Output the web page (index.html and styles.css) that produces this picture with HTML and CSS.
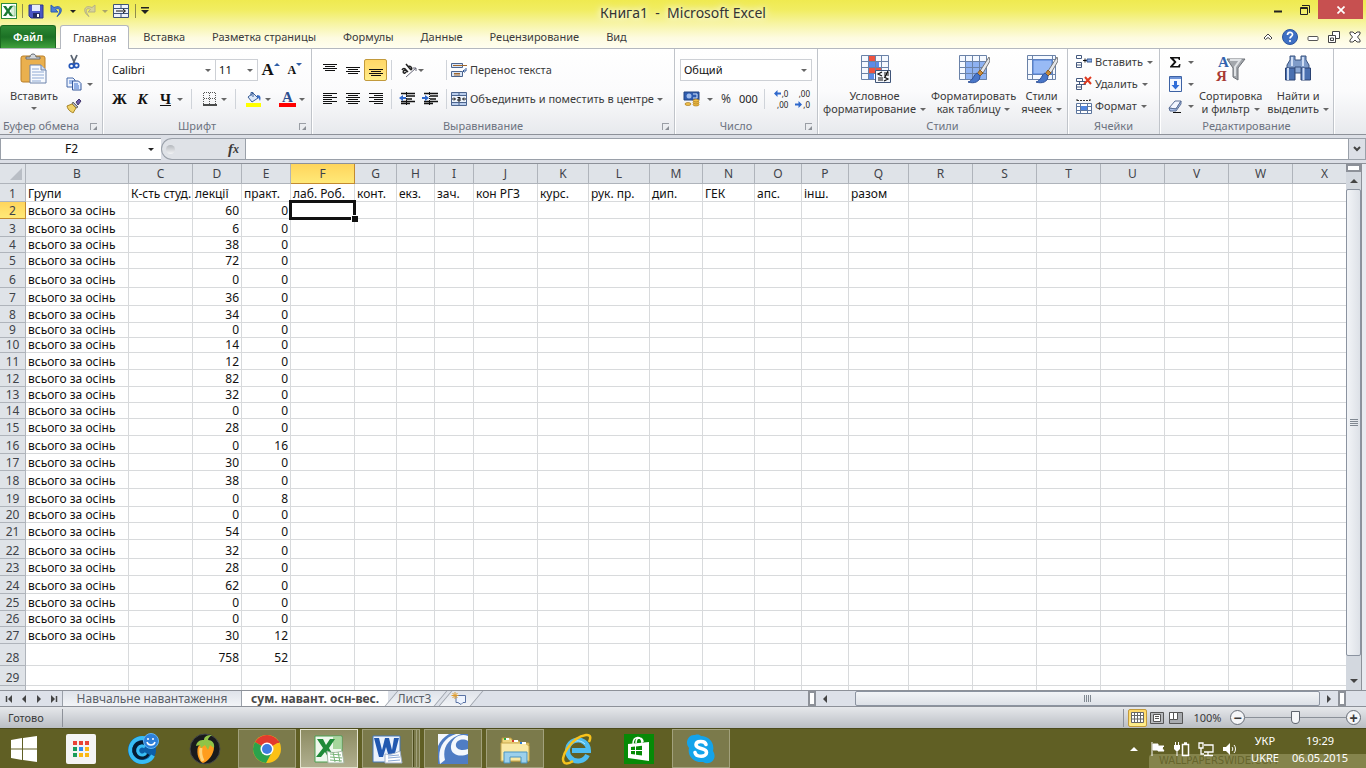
FILE: index.html
```
<!DOCTYPE html>
<html lang="ru">
<head>
    <meta charset="UTF-8">
    <title>Книга1 - Microsoft Excel</title>
    <link rel="stylesheet" href="styles.css">
</head>
<body>
<header class="top">
    <div class="titlebar">
        <div class="quick">
            <svg width="16" height="16" viewBox="0 0 16 16"><rect x=".5" y=".5" width="15" height="15" fill="#fff" stroke="#2f8a3c"/><path d="M10 3h4v10h-4" fill="#d9efd9" stroke="#8cc28c"/><path d="M2 3h3l2 3 2-3h3L8.500 8l3.500 5H9L7 10l-2 3H2l3.500-5z" fill="#1d7a34"/></svg>
            <span class="vsep"></span>
            <button title="Сохранить"><svg width="16" height="16" viewBox="0 0 16 16"><path d="M1 2h14v13H3l-2-2z" fill="#4a56c4" stroke="#2b3590"/><path d="M4 2h8v6H4z" fill="#e6ecfb"/><path d="M5 10h7v5H5z" fill="#222c66"/><path d="M9 11h2v3H9z" fill="#fff"/></svg></button>
            <button title="Отменить"><svg width="16" height="16" viewBox="0 0 16 16"><path d="M2 2v7h7L6.500 6.500C10 4 13 7 8 13.500 15 9 13 1 5 4.500z" fill="#4d7fd6" stroke="#2c5db4" stroke-width="1"/></svg></button>
            <i class="arr dark"></i>
            <button title="Вернуть"><svg width="16" height="16" viewBox="0 0 16 16"><path d="M14 2v7H7l2.500-2.500C6 4 3 7 8 13.500 1 9 3 1 11 4.500z" fill="#d6d29a" stroke="#b5b184" stroke-width="1"/></svg></button>
            <i class="arr pale"></i>
            <button title="Объединить"><svg width="17" height="16" viewBox="0 0 17 16"><path d="M.5 1.500h15v13H.5zM.5 5.500h15M.5 10.500h15M8 1.500v4M8 10.500v4" fill="#eef3fb" stroke="#3d5378"/><path d="M3 8h9M10 6l2.500 2L10 10" fill="none" stroke="#111"/></svg></button>
            <span class="vsep"></span>
            <button title="Настройка панели"><svg width="8" height="8" viewBox="0 0 8 8"><path d="M0 0h8v1.500H0zM0 3h8L4 7z" fill="#222"/></svg></button>
        </div>
        <h1>Книга1 &nbsp;- &nbsp;Microsoft Excel</h1>
        <div class="wincontrols">
            <button title="Свернуть"><svg width="10" height="10" viewBox="0 0 10 10"><path d="M1 6.500h8" stroke="#222" stroke-width="2"/></svg></button>
            <button title="Восстановить"><svg width="10" height="10" viewBox="0 0 10 10"><path d="M.5 2.500h7v7h-7zM2 .5h7.500V8M.5 3.500h7" fill="none" stroke="#222"/></svg></button>
            <button class="close" title="Закрыть"><svg width="8" height="8" viewBox="0 0 8 8"><path d="M.5.5l7 7M7.500.5l-7 7" stroke="#fff" stroke-width="1.700"/></svg></button>
        </div>
    </div>
    <nav class="tabs">
        <button class="file">Файл</button>
        <button class="tab current">Главная</button>
        <button class="tab">Вставка</button>
        <button class="tab">Разметка страницы</button>
        <button class="tab">Формулы</button>
        <button class="tab">Данные</button>
        <button class="tab">Рецензирование</button>
        <button class="tab">Вид</button>
        <div class="tabtools">
            <button title="Свернуть ленту"><svg width="10" height="8" viewBox="0 0 10 8"><path d="M1 5l4-4 4 4-1.500 1.500L5 4.500 2.500 6.500z" fill="#fff" stroke="#444"/></svg></button>
            <button title="Справка"><svg width="16" height="16" viewBox="0 0 16 16"><circle cx="8" cy="8" r="7.500" fill="#3e70c4" stroke="#2b559e"/><path d="M5.500 6c0-3.500 5-3.500 5-.5 0 2-2.500 2-2.500 4" fill="none" stroke="#fff" stroke-width="1.700"/><circle cx="8" cy="12" r="1.100" fill="#fff"/></svg></button>
            <button title="Свернуть окно"><svg width="12" height="12" viewBox="0 0 12 12"><rect x="1" y="5.500" width="10" height="4" rx="1" fill="#fff" stroke="#555"/></svg></button>
            <button title="Восстановить окно"><svg width="12" height="12" viewBox="0 0 12 12"><path d="M4.500.5h7v7h-7z" fill="#fff" stroke="#444"/><path d="M.5 4.500h7v7h-7zM2.500 7h3v2.500h-3z" fill="#fff" stroke="#444"/></svg></button>
            <button title="Закрыть окно"><svg width="12" height="12" viewBox="0 0 12 12"><path d="M1 1h3l2 2 2-2h3v2L8.500 6 11 9v2H8L6 9l-2 2H1V9l2.500-3L1 3z" fill="#fff" stroke="#444"/></svg></button>
        </div>
    </nav>
</header>

<section class="ribbon">
    <!-- Clipboard -->
    <div class="group g-clip">
        <div class="body cols">
            <button class="big">
                <svg width="30" height="32" viewBox="0 0 30 32"><rect x="2" y="3" width="24" height="26" rx="2" fill="#eab04e" stroke="#b97f28"/><path d="M7 6V4h4c0-4 6-4 6 0h4v2z" fill="#d5d9de" stroke="#666c74"/><path d="M11 12h11l5 5v13H11z" fill="#f7fafe" stroke="#6a82ab"/><path d="M22 12v5h5" fill="#cfdcf0" stroke="#6a82ab"/><path d="M13 16h7M13 19h12M13 22h12M13 25h12M13 28h9" stroke="#8ea9d4"/></svg>
                <span>Вставить</span>
                <i class="arr"></i>
            </button>
            <div class="stack">
                <button title="Вырезать"><svg width="16" height="16" viewBox="0 0 16 16"><path d="M5 1l4 9M11 1L7 10" stroke="#5a6472" stroke-width="1.800"/><circle cx="5.500" cy="12" r="2.200" fill="none" stroke="#2456b8" stroke-width="1.700"/><circle cx="10.500" cy="11.500" r="2.200" fill="none" stroke="#2456b8" stroke-width="1.700"/></svg></button>
                <button title="Копировать"><svg width="16" height="16" viewBox="0 0 16 16"><path d="M1 2h6l2 2v7H1z" fill="#eef4ff" stroke="#4468a8"/><path d="M3 5h4M3 7h4" stroke="#4a7dd0"/><path d="M6.500 5h6L15 7.500V14H6.500z" fill="#e4eeff" stroke="#34589c"/><path d="M8 8h4M8 10h5M8 12h5" stroke="#3a6ecb"/></svg><i class="arr"></i></button>
                <button title="Формат по образцу"><svg width="16" height="16" viewBox="0 0 16 16"><path d="M10 4l3-3 2 2-3 4z" fill="#6b5ca8" stroke="#44386f"/><path d="M7 4l5 5-2 1-4-4z" fill="#a9adb5" stroke="#666"/><path d="M1 8l5-2 4 4-3 5c-1-1-5-2-6-7z" fill="#f0d26a" stroke="#a88424"/></svg></button>
            </div>
        </div>
        <div class="label launchable">Буфер обмена<i class="launch"></i></div>
    </div>
    <!-- Font -->
    <div class="group g-font">
        <div class="body lines">
            <div class="line">
                <label class="combo font-name"><select aria-label="Шрифт"><option>Calibri</option></select></label>
                <label class="combo font-size"><select aria-label="Размер шрифта"><option>11</option></select></label>
                <button class="serif grow" title="Увеличить размер">A<sup class="up"></sup></button>
                <button class="serif shrink" title="Уменьшить размер">A<sup class="down"></sup></button>
            </div>
            <div class="line tools">
                <button class="serif"><b>Ж</b></button>
                <button class="serif"><b><em>К</em></b></button>
                <button class="serif"><b><u>Ч</u></b></button>
                <i class="arr"></i>
                <span class="sep"></span>
                <button title="Границы"><svg width="14" height="14" viewBox="0 0 14 14"><path d="M.5 1v12M6.500 1v12M12.500 1v12M1 .5h12M1 6.500h12" stroke="#555" stroke-dasharray="1 1"/><path d="M0 13h14" stroke="#111" stroke-width="1.500"/></svg></button>
                <i class="arr"></i>
                <span class="sep"></span>
                <button title="Цвет заливки"><svg width="17" height="16" viewBox="0 0 17 16"><path d="M3 6l5-4 5 5-6 4z" fill="#dce8f8" stroke="#3b5f98"/><path d="M6 5V1.500h2V6" fill="none" stroke="#3b5f98"/><path d="M12 4c4 0 4 3 3 6-1-2-1-3-3-4z" fill="#356ac4"/><path d="M1 12h15v4H1z" fill="#ffff00"/></svg></button>
                <i class="arr"></i>
                <button class="serif fontcolor" title="Цвет текста">A</button>
                <i class="arr"></i>
            </div>
        </div>
        <div class="label launchable">Шрифт<i class="launch"></i></div>
    </div>
    <!-- Alignment -->
    <div class="group g-align">
        <div class="body lines">
            <div class="line">
                <button title="По верхнему краю"><svg width="14" height="14" viewBox="0 0 14 14"><path d="M0 1.500h14M2 3.500h10M0 5.500h14M2 7.500h10" stroke="#111"/></svg></button>
                <button title="Выровнять по середине"><svg width="14" height="14" viewBox="0 0 14 14"><path d="M0 4.500h14M2 6.500h10M0 8.500h14M2 10.500h10" stroke="#111"/></svg></button>
                <button class="on" title="По нижнему краю"><svg width="14" height="14" viewBox="0 0 14 14"><path d="M0 6.500h14M2 8.500h10M0 10.500h14M2 12.500h10" stroke="#111"/></svg></button>
                <span class="sep"></span>
                <button class="wide" title="Ориентация"><svg width="16" height="16" viewBox="0 0 16 16"><path d="M1 8c1-2 3-2 4 0l2 2M5 8C1 8 2 12 4 11l2-2M5 2l5 6M7 5c2-2 5 1 3 3" fill="none" stroke="#222" stroke-width="1.500"/><path d="M5 15l10-9M15 9V6h-3" fill="none" stroke="#667"/></svg><i class="arr"></i></button>
                <span class="sep"></span>
                <button class="txt"><svg width="16" height="16" viewBox="0 0 16 16"><path d="M.5 1.500h11v4H.5zM.5 9.500h11v5H.5z" fill="#dbe6f6" stroke="#4b648e"/><path d="M2 3.500h14M3 11.500h6M3 13h6" stroke="#a0672c"/><path d="M15 6v3h-3M13.500 7.500L12 9l1.500 1.500" fill="none" stroke="#2d5596"/></svg>Перенос текста</button>
            </div>
            <div class="line">
                <button title="По левому краю"><svg width="14" height="14" viewBox="0 0 14 14"><path d="M0 1.500h14M0 3.500h9M0 5.500h14M0 7.500h9M0 9.500h14M0 11.500h9" stroke="#111"/></svg></button>
                <button title="По центру"><svg width="14" height="14" viewBox="0 0 14 14"><path d="M0 1.500h14M2 3.500h10M0 5.500h14M2 7.500h10M0 9.500h14M2 11.500h10" stroke="#111"/></svg></button>
                <button title="По правому краю"><svg width="14" height="14" viewBox="0 0 14 14"><path d="M0 1.500h14M5 3.500h9M0 5.500h14M5 7.500h9M0 9.500h14M5 11.500h9" stroke="#111"/></svg></button>
                <span class="sep"></span>
                <button title="Уменьшить отступ"><svg width="17" height="14" viewBox="0 0 17 14"><path d="M2 1.500h14M7 4h9M7 7h6M2 9.500h14M2 11.500h9" stroke="#111" stroke-width="1.500"/><path d="M7.500 0v14" stroke="#111" stroke-dasharray="1 1"/><path d="M0 6l4-3v2h3v2H4v2z" fill="#2f68cc"/></svg></button>
                <button title="Увеличить отступ"><svg width="17" height="14" viewBox="0 0 17 14"><path d="M2 1.500h14M8 4h8M8 7h6M2 9.500h14M2 11.500h9" stroke="#111" stroke-width="1.500"/><path d="M7.500 0v14" stroke="#111" stroke-dasharray="1 1"/><path d="M7 6L3 3v2H0v2h3v2z" fill="#2f68cc"/></svg></button>
                <span class="sep"></span>
                <button class="txt"><svg width="16" height="16" viewBox="0 0 16 16"><path d="M.5 1.500h15v13H.5z" fill="#b9cdec" stroke="#4b648e"/><path d="M.5 4.500h15M.5 11.500h15M8 1v3M8 12v3" stroke="#4b648e"/><path d="M1 5h14v6H1z" fill="#eef4fc"/><path d="M1 8h3M3 6.500L4.500 8 3 9.500M15 8h-3M13 6.500L11.500 8 13 9.500M6.500 6.500H9V10H7V8h2" fill="none" stroke="#111"/></svg>Объединить и поместить в центре<i class="arr"></i></button>
            </div>
        </div>
        <div class="label launchable">Выравнивание<i class="launch"></i></div>
    </div>
    <!-- Number -->
    <div class="group g-num">
        <div class="body lines">
            <div class="line">
                <label class="combo num-format"><select aria-label="Числовой формат"><option>Общий</option></select></label>
            </div>
            <div class="line">
                <button title="Денежный формат"><svg width="17" height="16" viewBox="0 0 17 16"><path d="M1 1h15v8H1z" fill="#2e5cb0" stroke="#224482"/><circle cx="6" cy="5" r="2.500" fill="#9fbcec"/><path d="M10 3h4v4h-4" fill="none" stroke="#cfe0fa"/><g fill="#f2c14a" stroke="#9a6a10" stroke-width=".6"><ellipse cx="13" cy="13.500" rx="3" ry="1.500"/><ellipse cx="13" cy="11.500" rx="3" ry="1.500"/><ellipse cx="13" cy="9.500" rx="3" ry="1.500"/><ellipse cx="5" cy="13" rx="3" ry="1.500"/></g></svg></button>
                <i class="arr"></i>
                <button class="pct">%</button>
                <button class="pct narrow">000</button>
                <span class="sep"></span>
                <button class="dec" title="Увеличить разрядность"><span><svg width="7" height="7" viewBox="0 0 7 7"><path d="M0 3.500L3.500 0v2.500H7v2H3.500V7z" fill="#2f68cc"/></svg>,0</span><span>,00</span></button>
                <button class="dec" title="Уменьшить разрядность"><span>,00</span><span><svg width="7" height="7" viewBox="0 0 7 7"><path d="M7 3.500L3.500 0v2.500H0v2h3.500V7z" fill="#2f68cc"/></svg>,0</span></button>
            </div>
        </div>
        <div class="label launchable">Число<i class="launch"></i></div>
    </div>
    <!-- Styles -->
    <div class="group g-styles">
        <div class="body cols">
            <button class="big">
                <svg width="32" height="32" viewBox="0 0 32 32"><path d="M2.500 2.500h27v24h-27z" fill="#f5f9ff"/><path d="M9 3h7v6H9zM9 15h13v6H9z" fill="#ee5340"/><path d="M9 9h11v6H9zM9 21h6v6H9z" fill="#5c8be8"/><path d="M2.500 2.500h27v24h-27zM9.500 2v25M16.500 2v25M22.500 2v25M2 8.500h28M2 14.500h28M2 20.500h28" fill="none" stroke="#6a82a8"/><path d="M16.500 17.500h15v12h-15z" fill="#f4f7fb" stroke="#3f5478"/><path d="M23 19l-4 2 4 2M19 25h5M19 27h5M25 20h5M25 22h5M29 18l-3 6M25 24l4 2-4 2" fill="none" stroke="#111" stroke-width="1.200"/></svg>
                <span>Условное</span><span>форматирование<i class="arr"></i></span>
            </button>
            <button class="big">
                <svg width="32" height="32" viewBox="0 0 32 32"><path d="M1.500 2.500h27v24h-27z" fill="#f5f9ff"/><path d="M8 9h21v18H8z" fill="#8eb2f2"/><path d="M1.500 2.500h27v24h-27zM7.500 2v25M14.500 2v25M21.500 2v25M1 8.500h28M1 14.500h28M1 20.500h28" fill="none" stroke="#6a82a8"/><path d="M31 4l-9 14 3 2 7-12z" fill="#e4e6ea" stroke="#777"/><path d="M22 17l-3 4 3 2 3-3z" fill="#c98b3a" stroke="#8a5a1c"/><path d="M19 20c-3 1-4 8-9 9 6 2 12 0 12-6z" fill="#4976c8" stroke="#2f529a"/></svg>
                <span>Форматировать</span><span>как таблицу<i class="arr"></i></span>
            </button>
            <button class="big">
                <svg width="32" height="32" viewBox="0 0 32 32"><path d="M1.500 2.500h28v24h-28z" fill="#f5f9ff" stroke="#6a82a8"/><path d="M6.500 2v25M26.500 2v25M1 6.500h28M1 21.500h28" stroke="#6a82a8"/><path d="M7 7h19v14H7z" fill="#98baf5" stroke="#4f7fd4"/><path d="M31 4l-9 14 3 2 7-12z" fill="#e4e6ea" stroke="#777"/><path d="M22 17l-3 4 3 2 3-3z" fill="#c98b3a" stroke="#8a5a1c"/><path d="M19 20c-3 1-4 8-9 9 6 2 12 0 12-6z" fill="#4976c8" stroke="#2f529a"/></svg>
                <span>Стили</span><span>ячеек<i class="arr"></i></span>
            </button>
        </div>
        <div class="label">Стили</div>
    </div>
    <!-- Cells -->
    <div class="group g-cells">
        <div class="body stack">
            <button class="txt"><svg width="16" height="16" viewBox="0 0 16 16"><path d="M.5 1.500h5v3h-5zM.5 8.500h5v5h-5zM.5 11h5" fill="#fff" stroke="#44597e"/><path d="M7 6.500h4M9 4.500v4" stroke="#111"/><path d="M11 5h5v3h-5z" fill="#8fb1ea" stroke="#34568e"/></svg>Вставить<i class="arr"></i></button>
            <button class="txt"><svg width="16" height="16" viewBox="0 0 16 16"><path d="M.5 2.500h6v3h-6zM3.500 5.500h6v3h-6zM.5 8.500h5v5h-5zM.5 11h5" fill="#fff" stroke="#44597e"/><path d="M9 1l6 7M15 1L8 8" stroke="#e03a20" stroke-width="2"/></svg>Удалить<i class="arr"></i></button>
            <button class="txt"><svg width="16" height="16" viewBox="0 0 16 16"><path d="M1 1v3M14 1v3M1 2.500h13" stroke="#333" stroke-dasharray="2 1"/><path d="M.5 5.500h15v10H.5zM4.500 5v10M11.500 5v10M0 8.500h16M0 12.500h16" fill="#fff" stroke="#5d769e"/><path d="M5 8h6v4H5z" fill="#4f86e2"/></svg>Формат<i class="arr"></i></button>
        </div>
        <div class="label">Ячейки</div>
    </div>
    <!-- Editing -->
    <div class="group g-edit">
        <div class="body cols">
            <div class="stack">
                <button title="Сумма"><svg width="16" height="16" viewBox="0 0 16 16"><path d="M3 3h10v3h-1l-1-1.500H6.500L9.500 8l-3.500 4h5l1.500-2h1l-.5 3.500H3v-1L7 8 3 4z" fill="#111"/></svg><i class="arr"></i></button>
                <button title="Заполнить"><svg width="16" height="16" viewBox="0 0 16 16"><path d="M2.500.5h12v15h-12z" fill="#f3f7ff" stroke="#3d62a4"/><path d="M3 1h11v2H3z" fill="#6d93d8"/><path d="M7 5h3v4h2.500l-4 4.500-4-4.500H7z" fill="#2f6cd8"/></svg><i class="arr"></i></button>
                <button title="Очистить"><svg width="16" height="16" viewBox="0 0 16 16"><path d="M2 10l6-7h6l-5 8z" fill="#f2f6ff" stroke="#5a6f96"/><path d="M2 10l7 1 5-8v3l-5 7H3z" fill="#a9c0ea" stroke="#5a6f96"/><path d="M6 14.500h8" stroke="#111"/></svg><i class="arr"></i></button>
            </div>
            <button class="big">
                <svg width="32" height="32" viewBox="0 0 32 32"><path d="M12 6h18l-7 9v12l-5-3v-9z" fill="#a3a7ac" stroke="#6c7076"/><path d="M15 7h10l-5 7v9" fill="none" stroke="#dfe2e5" stroke-width="2"/><text x="3" y="14" class="az az-a">A</text><text x="1" y="28" class="az az-z">Я</text></svg>
                <span>Сортировка</span><span>и фильтр<i class="arr"></i></span>
            </button>
            <button class="big">
                <svg width="32" height="32" viewBox="0 0 32 32"><path d="M8 3h5v4h6V3h5v4l3 5v6H5v-6l3-5z" fill="#7f9cc9" stroke="#38527f"/><path d="M3.500 15h9.500v12H3.500zM19 15h9.500v12H19z" fill="#4a70b0" stroke="#2a4272"/><path d="M6 15v12M21.500 15v12M10 4v9M21 4v9" stroke="#cfdef5" stroke-width="2"/><path d="M13 14h6v6h-6z" fill="#8da9d4" stroke="#38527f"/></svg>
                <span>Найти и</span><span>выделить<i class="arr"></i></span>
            </button>
        </div>
        <div class="label">Редактирование</div>
    </div>
</section>

<section class="formula">
    <div class="namebox"><input type="text" value="F2" aria-label="Имя"><i class="arr dark"></i></div>
    <div class="fx"><span class="knob"></span><button title="Вставить функцию"><i>f</i><sub>x</sub></button></div>
    <input class="fx-input" type="text" aria-label="Строка формул">
    <button class="expand" title="Развернуть"><svg width="8" height="6" viewBox="0 0 8 6"><path d="M1 1l3 3 3-3" fill="none" stroke="#444" stroke-width="2"/></svg></button>
</section>

<main class="sheet">
    <div class="grid"><table id="cells"></table></div>
    <div class="vscroll">
        <span class="split"></span>
        <button title="Вверх"><i class="tri up"></i></button>
        <div class="thumb"><span class="grip"></span></div>
        <button title="Вниз"><i class="tri down"></i></button>
    </div>
</main>

<div class="sheetbar">
    <div class="sheetnav">
        <button title="Первый"><svg width="8" height="8" viewBox="0 0 8 8"><path d="M1.500 1v6" stroke="#444" stroke-width="1.500"/><path d="M7 0v8L3 4z" fill="#444"/></svg></button>
        <button title="Назад"><svg width="8" height="8" viewBox="0 0 8 8"><path d="M6 0v8L2 4z" fill="#444"/></svg></button>
        <button title="Вперед"><svg width="8" height="8" viewBox="0 0 8 8"><path d="M2 0v8l4-4z" fill="#444"/></svg></button>
        <button title="Последний"><svg width="8" height="8" viewBox="0 0 8 8"><path d="M6.500 1v6" stroke="#444" stroke-width="1.500"/><path d="M1 0v8l4-4z" fill="#444"/></svg></button>
    </div>
    <button class="stab first">Навчальне навантаження</button>
    <button class="stab active">сум. навант. осн-вес.</button>
    <button class="stab slant">Лист3</button>
    <button class="stab slant add" title="Вставить лист"><svg width="16" height="14" viewBox="0 0 16 14"><path d="M5 3.500h9.500v7H12l-2 2-3-2H5z" fill="#eef4ff" stroke="#5a73a4"/><path d="M4 0v7M.5 3.500h7M1.500 1l5 5M6.500 1l-5 5" stroke="#e09c2a"/></svg></button>
    <div class="hscroll">
        <span class="split"></span>
        <button title="Влево"><i class="tri left"></i></button>
        <div class="track"><div class="thumb"><span class="grip"></span></div></div>
        <button title="Вправо"><i class="tri right"></i></button>
        <span class="split"></span>
    </div>
</div>

<div class="status">
    <span class="ready">Готово</span>
    <div class="views">
        <button class="on" title="Обычный"><svg width="13" height="11" viewBox="0 0 13 11"><path d="M.5.5h12v10H.5zM3.500 0v11M6.500 0v11M9.500 0v11M0 3.500h13M0 7h13" fill="#fff" stroke="#666"/></svg></button>
        <button title="Разметка страницы"><svg width="14" height="12" viewBox="0 0 14 12"><path d="M.5.5h13v11H.5z" fill="#b8babd" stroke="#555"/><path d="M3.500 2.500h7v7h-7zM5 4.500h4M5 6.500h4" fill="#fff" stroke="#555"/></svg></button>
        <button title="Страничный режим"><svg width="14" height="12" viewBox="0 0 14 12"><path d="M.5.5h13v11H.5z" fill="#a8abaf" stroke="#555"/><path d="M.5.5h4v7h-4zM4.500.5h4v7h-4z" fill="#fff" stroke="#555"/></svg></button>
    </div>
    <button class="percent">100%</button>
    <button class="round" title="Уменьшить">&minus;</button>
    <input class="zoom" type="range" min="0" max="100" value="50" aria-label="Масштаб">
    <button class="round" title="Увеличить">+</button>
</div>

<footer class="taskbar">
    <div class="apps">
        <button class="start" title="Пуск"><svg width="26" height="26" viewBox="0 0 26 26"><path d="M0 4l11-2v10.500H0zM12 2l14-2v12.500H12zM0 13.500h11V24L0 22zM12 13.500h14V26l-14-2z" fill="#fff"/></svg></button>
        <button class="app" title="Приложения"><svg width="30" height="30" viewBox="0 0 30 30"><rect width="30" height="30" rx="2" fill="#f4f4f4"/><path d="M7 7h4v4H7zM13 7h4v4h-4zM19 7h4v4h-4z" fill="#ea4335"/><path d="M7 13h4v4H7zM7 19h4v4H7z" fill="#1a9c5a"/><path d="M13 13h4v4h-4z" fill="#2f8cf0"/><path d="M19 13h4v4h-4zM13 19h4v4h-4zM19 19h4v4h-4z" fill="#fbb812"/></svg></button>
        <button class="app" title="CyberLink"><svg width="32" height="32" viewBox="0 0 32 32"><circle cx="15" cy="17" r="14" fill="#0b5ea8"/><path d="M26 22.500A12 12 0 1 1 20 6" fill="none" stroke="#38bdf5" stroke-width="4"/><path d="M21 21a7.500 7.500 0 1 1-2-10" fill="none" stroke="#061c33" stroke-width="4"/><path d="M19 20a4.500 4.500 0 1 1-1-6" fill="none" stroke="#38bdf5" stroke-width="3"/><circle cx="24" cy="8" r="7.500" fill="#2d7fd8" stroke="#5eb4f2"/><path d="M21 5v2M26 5v2M20 9c1 4 7 4 8 0" fill="none" stroke="#fff" stroke-width="1.500"/></svg></button>
        <button class="app" title="FL Studio"><svg width="32" height="32" viewBox="0 0 32 32"><circle cx="16" cy="16" r="15" fill="#191a1c" stroke="#45474a"/><path d="M9 14c-2 6 1 15 5 16 5-1 11-9 11-16-3-4-12-5-16 0z" fill="#ff9d1e"/><path d="M12 15c-1 5 0 9 2 13" fill="none" stroke="#ffd37a" stroke-width="3"/><path d="M7 13C8 8 11 7 15 7c0-4 4-5 8-5-2 1-4 3-4 5 4 0 7 3 6 8l-4-3-2 5-3-5-4 3-1-3z" fill="#8fc447"/></svg></button>
        <button class="app open" title="Google Chrome"><svg width="30" height="30" viewBox="0 0 30 30"><circle cx="15" cy="15" r="14" fill="#fbc116"/><path d="M15 15L2.900 8A14 14 0 0 1 27.100 8z" fill="#e23a2e"/><path d="M15 15L2.900 8A14 14 0 0 0 14 29l6-11z" fill="#2ba24c"/><path d="M15 8h12.100" stroke="#e23a2e" stroke-width="2"/><circle cx="15" cy="15" r="6.500" fill="#fff"/><circle cx="15" cy="15" r="5" fill="#3f7de0"/></svg></button>
        <button class="app open current" title="Microsoft Excel"><svg width="32" height="30" viewBox="0 0 32 30"><path d="M2 2h27v26H2z" fill="#eef7ec" stroke="#4aa050"/><path d="M20 3h8v12h-8z" fill="#a7d69c"/><path d="M4 5h6l3 6 4-6h5l-6 9 5 9h-6l-3-5-4 5H3l7-9z" fill="#1f8a38"/><path d="M14 17c4 2 9 2 15 0l2 12H15z" fill="#fff" stroke="#a6b8a4"/><path d="M17 20l11 1M17 23l12 1M17 26l12 1M20 18l2 10M25 18l2 10" stroke="#79b579"/></svg></button>
        <button class="app open group-app" title="Microsoft Word"><svg width="32" height="30" viewBox="0 0 32 30"><path d="M2 2h27v26H2z" fill="#eaf2fc" stroke="#4577b8"/><path d="M3 4h5l3 12 3-12h4l3 12 2-12h5l-5 19h-5l-3-10-3 10H8z" fill="#2158b0"/><path d="M14 20c4 1 9 0 15-3l2 12H14z" fill="#fff" stroke="#a3b3ca"/><path d="M17 22l11-1M17 24l12-1M17 27l12-1" stroke="#89a8d6"/></svg></button>
        <button class="app open" title="Коммандер"><svg width="30" height="30" viewBox="0 0 30 30"><path d="M0 0h30v30H0z" fill="#4f7dc4"/><path d="M0 12V0h11C6 3 2 7 0 12z" fill="#f4f8fd"/><path d="M2 30C-1 15 5 4 18 0h5C10 5 4 14 7 26z" fill="#f4f8fd"/><path d="M30 2v5c-5-3-11-1-12 3s4 8 12 5v5c-9 4-18 0-17-8C14 4 22-1 30 2z" fill="#f4f8fd"/></svg></button>
        <button class="app open" title="Проводник"><svg width="32" height="30" viewBox="0 0 32 30"><path d="M3 4h9l2 3h6l2 2h8v18H3z" fill="#f0d680" stroke="#b8973a"/><path d="M2 9h24l4 3v15H2z" fill="#fae9a6" stroke="#c8a84c"/><path d="M5 4h5v2H5zM13 6h6v2h-6zM21 8h6v2h-6z" fill="#fff"/><path d="M5 4h2v2H5z" fill="#2ca83a"/><path d="M13 6h2v2h-2z" fill="#d43d2a"/><path d="M21 8h2v2h-2z" fill="#2c7ed4"/><path d="M5 29V18h23v11h-6v-6H11v6z" fill="#9cd0ec" stroke="#4b94c0"/></svg></button>
        <button class="app" title="Internet Explorer"><svg width="32" height="32" viewBox="0 0 32 32"><path d="M26.500 22A10.500 10.500 0 1 1 27.500 17.500H11" fill="none" stroke="#4fbdf0" stroke-width="5"/><path d="M8 13C11 7 19 6 24 11" fill="none" stroke="#b5ecff"/><path d="M4 30C-3 27 10 4 25 2c5-.5 5 3 3 7M4 30c2 1 5 0 8-2" fill="none" stroke="#f7c21c" stroke-width="2.500"/></svg></button>
        <button class="app" title="Магазин"><svg width="30" height="30" viewBox="0 0 30 30"><path d="M0 0h30v30H0z" fill="#078a07"/><path d="M4 10l21-2v19L4 24z" fill="#fff"/><path d="M9 10c0-8 9-9 9-1M12 9c0-7 7-6 7-1" fill="none" stroke="#fff" stroke-width="1.500"/><path d="M7 13l4-.500v3.500H7zM12 12.400l6-.6v4.200h-6zM7 17h4v3.500L7 20zM12 17h6v4.500l-6-.8z" fill="#078a07"/></svg></button>
        <button class="app open" title="Skype"><svg width="30" height="30" viewBox="0 0 30 30"><path d="M9 1c3-1 5 0 6 1 8 0 14 7 12 15 5 8-3 15-10 11C8 29 1 22 3 14-2 8 3 0 9 1z" fill="#13a3ea"/><path d="M20 10.500c-1-4-10-4-10 .3 0 5 10.500 2.400 10.500 7.700 0 5-10.500 5-11.500 0" fill="none" stroke="#fff" stroke-width="3.600" stroke-linecap="round"/></svg></button>
    </div>
    <div class="tray">
        <button title="Скрытые значки"><i class="tri up light"></i></button>
        <button title="Центр поддержки"><svg width="16" height="16" viewBox="0 0 16 16"><path d="M2 1v14M3 3h5v2h6l-2 2 2 3H8V9H3z" fill="#fff" stroke="#fff"/></svg></button>
        <button title="Батарея"><svg width="16" height="16" viewBox="0 0 16 16"><path d="M8.500 3.500h6v11h-6zM10 2h3" fill="none" stroke="#fff" stroke-width="1.500"/><path d="M1.500 1v4M4.500 1v4M3 9v6" stroke="#fff"/><path d="M0 4h6v4L4 10H2L0 8z" fill="#fff"/></svg></button>
        <button title="Сеть"><svg width="16" height="16" viewBox="0 0 16 16"><path d="M6 4h9v7H6M10 11v3M6 14.500h9M1 2h4v5H1zM3 7v6h3" fill="none" stroke="#fff" stroke-width="1.300"/></svg></button>
        <button title="Громкость"><svg width="16" height="16" viewBox="0 0 16 16"><path d="M1 6h3l4-4v12l-4-4H1z" fill="#fff"/><path d="M10 6c1 1 1 3 0 4M12 4c2 2 2 6 0 8" fill="none" stroke="#fff"/></svg></button>
        <button class="lang"><span>УКР</span><span>UKRE</span></button>
        <button class="clock"><span>19:29</span><span>06.05.2015</span></button>
    </div>
    <div class="wall">WALLPAPERSWIDE.COM</div>
</footer>

<script src="script.js"></script>
</body>
</html>
```
FILE: styles.css
```
* {
    box-sizing: border-box;
    margin: 0;
    padding: 0;
}

html, body {
    height: 100%;
}

body {
    display: flex;
    flex-direction: column;
    overflow: hidden;
    font: 11px/14px "Noto Sans", "Open Sans", sans-serif;
    color: #3b3b3b;
    background: #dfe3e8;
}

button, input, select {
    font: inherit;
    color: inherit;
    background: none;
    border: 0;
    border-radius: 0;
    outline: 0;
}

button {
    display: inline-flex;
    align-items: center;
    justify-content: center;
    white-space: nowrap;
}

svg {
    display: block;
    flex: none;
}

/* small drop-down arrow */
.arr {
    display: inline-block;
    flex: none;
    border: 3px solid transparent;
    border-top-color: #666;
    border-bottom: 0;
}

.arr.dark {
    border-top-color: #222;
}

.arr.pale {
    border-top-color: #aaa66a;
}

/* Title and tabs */
.top {
    flex: none;
    background: linear-gradient(#efea50 0, #f1ed62 10px, #f7f4a4 24px, #fdfbe0 38px, #fffef0 48px);
}

.titlebar {
    display: grid;
    grid-template-columns: 1fr auto 1fr;
    height: 25px;
}

.quick {
    display: flex;
    align-items: center;
    gap: 5px;
    padding: 0 1px;
    height: 22px;
}

.vsep {
    width: 1px;
    height: 14px;
    background: #8f8c4c;
}

.titlebar h1 {
    font-size: 14px;
    font-weight: normal;
    line-height: 25px;
    color: #333;
    text-shadow: 0 0 6px #fff, 0 0 10px #fff;
}

.wincontrols {
    display: flex;
    justify-content: flex-end;
    padding-right: 3px;
    height: 19px;
}

.wincontrols button {
    width: 27px;
}

.wincontrols .close {
    width: 45px;
    background: #c75050;
}

.tabs {
    display: flex;
    height: 24px;
    border-bottom: 1px solid #b4b8bf;
}

.file {
    width: 56px;
    margin-right: 4px;
    color: #fff;
    font-weight: 600;
    background: linear-gradient(#2d8a35, #1c7125 50%, #3fa13c);
    border: 1px solid #1a6a20;
    border-bottom: 0;
    border-radius: 3px 3px 0 0;
}

.tab {
    padding: 0 14px 0 13px;
}

.tab.current {
    height: 24px;
    padding: 0 12px;
    margin-right: 1px;
    background: #fff;
    border: 1px solid #b4b8bf;
    border-bottom: 0;
    border-radius: 3px 3px 0 0;
}

.tabtools {
    display: flex;
    align-items: center;
    gap: 9px;
    margin-left: auto;
    padding-right: 5px;
}

/* Ribbon */
.ribbon {
    display: flex;
    flex: none;
    height: 86px;
    background: linear-gradient(#fff, #fbfbfc 50%, #e7e9ed);
    border-bottom: 1px solid #8d9199;
}

.group {
    display: flex;
    flex-direction: column;
    flex: none;
    border-right: 1px solid #c0c4ca;
    box-shadow: 1px 0 #fff;
}

.g-clip {
    width: 103px;
}

.g-font {
    width: 209px;
}

.g-align {
    width: 363px;
}

.g-num {
    width: 143px;
}

.g-styles {
    width: 250px;
}

.g-cells {
    width: 92px;
}

.g-edit {
    width: 174px;
}

.group .body {
    flex: 1;
}

.label {
    display: flex;
    align-items: center;
    justify-content: center;
    position: relative;
    height: 17px;
    color: #6c7280;
}

.launchable {
    padding-right: 20px;
}

.launch {
    position: absolute;
    right: 5px;
    top: 6px;
    width: 7px;
    height: 7px;
    border: 1px solid #9a9ea5;
    border-width: 1px 0 0 1px;
}

.launch::after {
    content: "";
    position: absolute;
    right: 0;
    bottom: 0;
    border: 2px solid #8b8f96;
    border-top-color: transparent;
    border-left-color: transparent;
}

.cols {
    display: flex;
}

.lines {
    padding: 10px 5px 0;
}

.line {
    display: flex;
    align-items: center;
    height: 22px;
    margin-bottom: 7px;
}

.line button {
    width: 23px;
    height: 22px;
}

.line .txt, .stack .txt {
    width: auto;
    gap: 3px;
}

.line .wide {
    width: 33px;
    margin: 0 8px 0 5px;
    justify-content: flex-start;
    gap: 1px;
}

.stack {
    padding-top: 2px;
}

.stack button {
    display: flex;
    height: 22px;
    gap: 4px;
}

.stack .arr {
    margin-left: 1px;
}

.big {
    flex-direction: column;
    justify-content: flex-start;
    padding-top: 4px;
    line-height: 13px;
}

.big svg {
    margin-bottom: 4px;
}

.big span .arr {
    margin: 0 0 2px 4px;
}

.big > .arr {
    margin-top: 5px;
}

.g-clip .big {
    width: 64px;
    margin-left: 2px;
}

.sep {
    width: 1px;
    height: 20px;
    margin: 0 4px;
    background: #cfd3d9;
}

.combo {
    position: relative;
    height: 22px;
    background: #fff;
    border: 1px solid #cdd0d5;
}

.combo select {
    display: block;
    width: 100%;
    height: 20px;
    padding: 0 3px;
    color: #111;
    appearance: none;
}

.combo::after {
    content: "";
    position: absolute;
    right: 4px;
    top: 9px;
    border: 3px solid transparent;
    border-top-color: #666;
    border-bottom: 0;
}

.font-name {
    width: 112px;
}

.font-size {
    width: 44px;
    margin-left: -1px;
}

.num-format {
    width: 134px;
}

.serif {
    font-family: "Liberation Serif", serif;
    font-size: 15px;
    color: #111;
}

.grow, .shrink {
    font-weight: bold;
    margin-left: 2px;
}

.shrink {
    font-size: 12px;
}

.grow {
    font-size: 17px;
}

.serif sup {
    align-self: flex-start;
    margin-top: 4px;
    border: 3px solid transparent;
}

.serif .up {
    border-bottom-color: #2f5ea8;
    border-top: 0;
}

.serif .down {
    border-top-color: #2f5ea8;
    border-bottom: 0;
}

.tools .sep {
    margin: 0 6px 0 7px;
}

.tools .arr {
    margin-right: 1px;
}

.line .fontcolor {
    width: 17px;
    height: 16px;
    margin: 0 3px 0 7px;
    font-weight: bold;
    color: #2c4f8f;
    line-height: 12px;
    border-bottom: 4px solid #f00;
}

.on {
    background: linear-gradient(#ffd868, #ffe27a 60%, #fff08c);
    border: 1px solid #c29a3c;
    border-radius: 2px;
}

.g-align .lines {
    padding-left: 6px;
}

.g-num .arr {
    margin: 0 2px 0 4px;
}

.pct {
    font-size: 12px;
}

.g-num .narrow {
    font-size: 11px;
    color: #222;
}

.line .dec {
    flex-direction: column;
    align-items: flex-end;
    width: 22px;
    padding-right: 2px;
    font-size: 8px;
    line-height: 11px;
    color: #222;
}

.dec span {
    display: flex;
    align-items: center;
    gap: 1px;
}

.g-styles .cols {
    justify-content: center;
    gap: 5px;
}

.g-cells .stack {
    padding-left: 8px;
}

.g-edit .cols {
    gap: 5px;
    padding-left: 7px;
}

.az {
    font: bold 15px "Liberation Serif", serif;
}

.az-a {
    fill: #3263ad;
}

.az-z {
    fill: #a83a34;
}

/* Formula bar */
.formula {
    display: flex;
    flex: none;
    height: 29px;
    padding: 3px 0;
    background: #dcdfe6;
    border-bottom: 1px solid #8d9199;
}

.namebox, .fx-input, .expand, .fx {
    border: 1px solid #9aa0a9;
}

.namebox {
    display: flex;
    align-items: center;
    width: 161px;
    padding-right: 7px;
    background: #fff;
    border-right: 0;
}

.namebox input {
    flex: 1;
    width: 60px;
    padding-right: 6px;
    text-align: center;
    font-size: 12px;
    color: #111;
}

.fx {
    display: flex;
    align-items: center;
    justify-content: space-between;
    width: 84px;
    padding: 0 6px 0 4px;
    background: #dfe2e7;
    border-right: 0;
    border-radius: 11px 0 0 11px;
}

.knob {
    width: 9px;
    height: 9px;
    border-radius: 50%;
    background: linear-gradient(#b4b8bd, #f2f3f5);
}

.fx button {
    font: bold 15px/18px "Liberation Serif", serif;
}

.fx sub {
    font-size: 12px;
    font-style: italic;
}

.fx-input {
    flex: 1;
    padding: 0 4px;
    background: #fff;
}

.expand {
    width: 17px;
    border-left: 0;
}

/* Sheet */
.sheet {
    display: flex;
    flex: 1;
    min-height: 0;
}

.grid {
    flex: 1;
    min-width: 0;
    overflow: hidden;
    background: #fff;
}

.grid table {
    width: 0;
    table-layout: fixed;
    border-collapse: separate;
    border-spacing: 0;
}

.grid td, .grid th {
    position: relative;
    padding: 0 2px 1px;
    font-size: 12px;
    line-height: 13px;
    white-space: nowrap;
    vertical-align: bottom;
    border-right: 1px solid #d8dadc;
    border-bottom: 1px solid #d8dadc;
    color: #111;
}

.grid td.num {
    text-align: right;
}

.grid th {
    font-weight: normal;
    color: #3f434a;
    background: #dfe3e8;
    border-color: #afb4bb;
}

.grid thead th {
    padding-bottom: 0;
    vertical-align: middle;
}

.grid th.hot {
    background: linear-gradient(#ffd55c, #ffe978);
    border-color: #c28a30;
}

.corner::after {
    content: "";
    position: absolute;
    right: 3px;
    bottom: 3px;
    border: 6px solid #b9bec5;
    border-top-color: transparent;
    border-left-color: transparent;
}

.grid td.selected::before {
    content: "";
    position: absolute;
    z-index: 1;
    inset: -2px -2px -2px -2px;
    border: 3px solid #111;
}

.grid td.selected::after {
    content: "";
    position: absolute;
    z-index: 2;
    right: -4px;
    bottom: -4px;
    width: 6px;
    height: 6px;
    background: #111;
    border: 1px solid #fff;
    border-width: 1px 0 0 1px;
}

.tri {
    border: 4px solid transparent;
}

.tri.up {
    border-bottom-color: #444;
    border-top: 0;
}

.tri.down {
    border-top-color: #444;
    border-bottom: 0;
}

.tri.left {
    border-right-color: #444;
    border-left: 0;
}

.tri.right {
    border-left-color: #444;
    border-right: 0;
}

.tri.light {
    border-bottom-color: #fff;
}

.split {
    flex: none;
    background: #fff;
    border: 2px solid #8d9199;
}

.vscroll {
    display: flex;
    flex-direction: column;
    width: 20px;
    padding-right: 4px;
    background: linear-gradient(to right, #d3d8df 15px, #8d9199 15px, #8d9199 16px, #e8eaf0 16px);
}

.vscroll .split {
    height: 8px;
    width: 15px;
}

.vscroll button {
    height: 17px;
    width: 15px;
}

.vscroll button:last-child {
    height: 18px;
    margin-top: 16px;
}

.vscroll .thumb, .hscroll .thumb {
    display: flex;
    align-items: center;
    justify-content: center;
    border: 1px solid #8b93a0;
    border-radius: 2px;
}

.vscroll .thumb {
    flex: 1;
    width: 15px;
    background: linear-gradient(to right, #f2f4f7, #dde1e7);
}

.vscroll .grip {
    width: 8px;
    height: 7px;
    background: repeating-linear-gradient(#808891 0 1px, transparent 1px 2px);
}

/* Sheet tabs */
.sheetbar {
    display: flex;
    flex: none;
    height: 17px;
    padding-right: 20px;
    background: #dde1e9;
    border-top: 1px solid #8d9199;
    border-bottom: 1px solid #8d9199;
}

.sheetnav {
    display: flex;
    align-items: center;
    gap: 7px;
    width: 62px;
    padding-left: 5px;
}

.stab {
    font-size: 12px;
    color: #5a5f68;
}

.stab.first {
    width: 180px;
    background: linear-gradient(#dfe3ea, #f2f4f7);
    border: 1px solid #9aa0a9;
    border-width: 0 1px;
}

.stab.active {
    padding: 0 9px;
    color: #4a4a4a;
    font-weight: bold;
    background: #fff;
}

.stab.slant {
    position: relative;
    width: 56px;
    margin-left: -2px;
}

.stab.slant::before {
    content: "";
    position: absolute;
    z-index: -1;
    inset: 0 1px 0 5px;
    background: linear-gradient(#dfe3ea, #f2f4f7);
    border: 1px solid #9aa0a9;
    border-width: 0 1px;
    transform: skewX(-40deg);
}

.slant {
    isolation: isolate;
}

.stab.add {
    width: 38px;
}

.hscroll {
    display: flex;
    align-items: center;
    width: 538px;
    margin-left: auto;
}

.hscroll .split {
    width: 8px;
    height: 15px;
}

.hscroll button {
    width: 18px;
    height: 15px;
}

.hscroll .track {
    flex: 1;
    padding-left: 21px;
}

.hscroll .thumb {
    height: 15px;
    background: linear-gradient(#f2f4f7, #dde1e7);
}

.hscroll .grip {
    width: 8px;
    height: 7px;
    background: repeating-linear-gradient(to right, #808891 0 1px, transparent 1px 2px);
}

/* Status bar */
.status {
    display: flex;
    align-items: center;
    flex: none;
    height: 21px;
    padding-right: 5px;
    background: linear-gradient(#e6e8eb, #d0d3d8 50%, #babec3);
}

.ready {
    width: 63px;
    padding-left: 8px;
    line-height: 18px;
    border-right: 1px solid #8d9199;
}

.views {
    display: flex;
    align-items: center;
    margin-left: auto;
    padding-left: 4px;
    border-left: 1px solid #8d9199;
}

.views button {
    width: 19px;
    height: 18px;
}

.percent {
    width: 45px;
}

.round {
    width: 15px;
    height: 15px;
    font: bold 14px/12px "Liberation Sans", sans-serif;
    background: #f5f6f8;
    border: 1px solid #666c75;
    border-radius: 50%;
}

.zoom {
    width: 101px;
    height: 15px;
    appearance: none;
    background: linear-gradient(#8a9098, #8a9098) center / 100% 1px no-repeat;
}

.zoom::-webkit-slider-thumb {
    appearance: none;
    width: 9px;
    height: 13px;
    background: #f6f7f9;
    border: 1px solid #5f656e;
    border-radius: 1px 1px 5px 5px;
}

/* Taskbar */
.taskbar {
    position: relative;
    display: flex;
    justify-content: space-between;
    flex: none;
    height: 40px;
    background: #605f24;
    border-top: 1px solid #4c4b1c;
}

.apps {
    display: flex;
    gap: 4px;
}

.start {
    width: 48px;
}

.app {
    width: 58px;
    height: 39px;
}

.app.open {
    background: #7b7a4b;
    border: 1px solid #a2a17c;
}

.app.current {
    background: linear-gradient(#8d8c62, #b0af8f);
    border-color: #e4e3cf;
}

.app.group-app {
    padding-right: 8px;
    background: linear-gradient(to right, #7b7a4b 49px, #a2a17c 49px, #a2a17c 50px, #4c4b1c 50px, #4c4b1c 51px, #7b7a4b 51px, #7b7a4b 53px, #a2a17c 53px, #a2a17c 54px, #7b7a4b 54px);
}

.tray {
    position: relative;
    z-index: 1;
    display: flex;
    align-items: center;
    color: #fff;
    line-height: 17px;
}

.tray button {
    width: 24px;
}

.tray .lang, .tray .clock {
    flex-direction: column;
    width: 46px;
}

.tray .clock {
    width: 64px;
    margin-right: 14px;
}

.wall {
    position: absolute;
    right: 0;
    bottom: 0;
    width: 217px;
    height: 14px;
    padding-left: 10px;
    font: 10px/14px "DejaVu Sans", sans-serif;
    color: #66652c;
    background: #85844c;
    border-radius: 4px 0 0 0;
}
```
FILE: script.js
```
const columns = [
    ["B", 103, "Групи"], ["C", 64, "К-сть студ."], ["D", 49, "лекції"], ["E", 49, "практ."],
    ["F", 64, "лаб. Роб."], ["G", 42, "конт."], ["H", 38, "екз."], ["I", 39, "зач."],
    ["J", 64, "кон РГЗ"], ["K", 51, "курс."], ["L", 61, "рук. пр."], ["M", 53, "дип."],
    ["N", 52, "ГЕК"], ["O", 47, "апс."], ["P", 47, "інш."], ["Q", 60, "разом"],
    ["R", 64], ["S", 64], ["T", 64], ["U", 64], ["V", 64], ["W", 64], ["X", 64]
];

// height, lectures, practice
const rows = [
    [17, 60, 0], [18, 6, 0], [16, 38, 0], [16, 72, 0], [19, 0, 0], [18, 36, 0], [17, 34, 0],
    [15, 0, 0], [15, 14, 0], [17, 12, 0], [17, 82, 0], [16, 32, 0], [16, 0, 0], [17, 28, 0],
    [18, 0, 16], [17, 30, 0], [18, 38, 0], [18, 0, 8], [16, 0, 0], [17, 54, 0], [19, 32, 0],
    [17, 28, 0], [18, 62, 0], [17, 0, 0], [16, 0, 0], [17, 30, 12], [22, 758, 52], [20], [20]
];

const table = document.getElementById("cells");

function add(parent, tag, text, className) {
    const el = document.createElement(tag);
    if (text !== undefined) el.textContent = text;
    if (className) el.className = className;
    parent.appendChild(el);
    return el;
}

// Column widths
const group = add(table, "colgroup");
add(group, "col").style.width = "26px";
columns.forEach(c => {
    add(group, "col").style.width = c[1] + "px";
});

// Column letters
const head = add(add(table, "thead"), "tr");
head.style.height = "20px";
add(head, "th", "", "corner");
columns.forEach(c => add(head, "th", c[0], c[0] === "F" ? "hot" : ""));

// First row holds the titles
const body = add(table, "tbody");
const titles = add(body, "tr");
titles.style.height = "18px";
add(titles, "th", 1);
columns.forEach(c => add(titles, "td", c[2]));

rows.forEach((row, i) => {
    const n = i + 2;
    const tr = add(body, "tr");
    tr.style.height = row[0] + "px";
    add(tr, "th", n < 30 ? n : "", n === 2 ? "hot" : "");
    columns.forEach(c => {
        if (c[0] === "B" && n < 28) add(tr, "td", "всього за осінь");
        else if (c[0] === "D") add(tr, "td", row[1], "num");
        else if (c[0] === "E") add(tr, "td", row[2], "num");
        else add(tr, "td", "", c[0] === "F" && n === 2 ? "selected" : "");
    });
});
```
